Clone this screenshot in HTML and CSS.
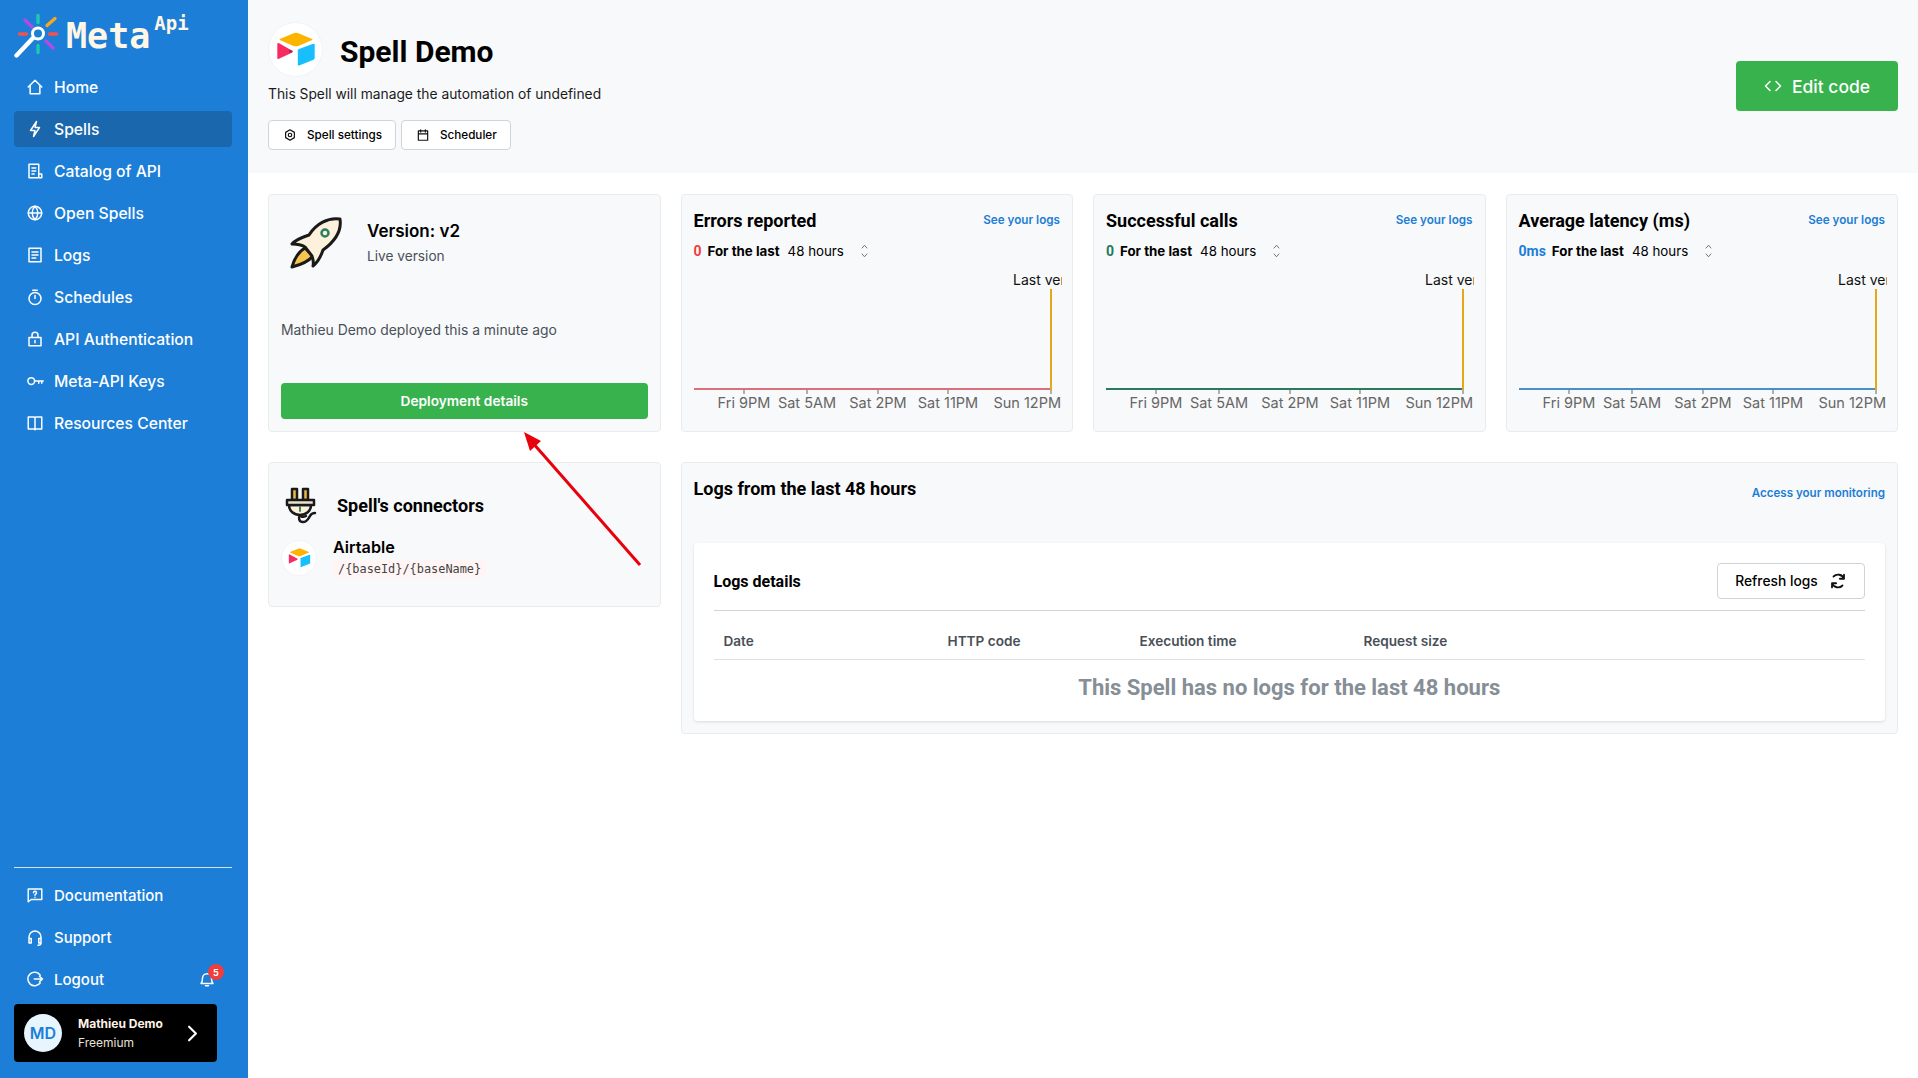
FILE: index.html
```html
<!DOCTYPE html>
<html>
<head>
  <meta charset="utf-8">
  <title>Spell Demo</title>
  <link rel="stylesheet" href="styles.css">
</head>
<body>
<div class="app">
  <aside class="sidebar">
    <div class="logo">
      <svg class="logo-mark" viewBox="14 14 44 44" width="44" height="44" fill="none" stroke-linecap="round">
        <path d="M38 15.5v7M38 45.5v7" stroke="#1fc8b0" stroke-width="3.4"/>
        <path d="M47 25.5l8-7" stroke="#f5a91c" stroke-width="3.4"/>
        <path d="M25 20l7 7M46 41l7 7" stroke="#b14be8" stroke-width="3.4"/>
        <path d="M19.5 34h7M49.5 34h7" stroke="#f0524f" stroke-width="3.4"/>
        <path d="M33 38L16.500 55.500" stroke="#fff" stroke-width="4.400"/>
        <circle cx="38" cy="33.500" r="5.500" stroke="#fff" stroke-width="3"/>
      </svg>
      <span class="logo-meta">Meta</span><span class="logo-api">Api</span>
    </div>

    <nav class="nav">
      <a class="nav-item"><svg class="ico" viewBox="0 0 24 24"><path d="M3 12l9-9 9 9M5.500 10v11h13V10"/></svg>Home</a>
      <a class="nav-item active"><svg class="ico" viewBox="0 0 24 24"><path d="M14 2L6 14h6l-2 8 8-12h-6z"/></svg>Spells</a>
      <a class="nav-item"><svg class="ico" viewBox="0 0 24 24"><path d="M17 21H4V3h13v18h4v-5h-4M8 8h5M8 12h5M8 16h3"/></svg>Catalog of API</a>
      <a class="nav-item"><svg class="ico" viewBox="0 0 24 24"><circle cx="12" cy="12" r="9"/><path d="M3 12h18M12 3c-5 5-5 13 0 18M12 3c5 5 5 13 0 18"/></svg>Open Spells</a>
      <a class="nav-item"><svg class="ico" viewBox="0 0 24 24"><path d="M4 3h16v18H4zM8 8h8M8 12h8M8 16h5"/></svg>Logs</a>
      <a class="nav-item"><svg class="ico" viewBox="0 0 24 24"><circle cx="12" cy="14" r="8"/><path d="M9 3h6M12 14v-4"/></svg>Schedules</a>
      <a class="nav-item"><svg class="ico" viewBox="0 0 24 24"><path d="M4 10h16v11H4zM8 10V7a4 4 0 018 0v3M12 14v3"/></svg>API Authentication</a>
      <a class="nav-item"><svg class="ico" viewBox="0 0 24 24"><circle cx="7" cy="12" r="4.500"/><path d="M11.500 12H23M17 12v3M21 12v3"/></svg>Meta-API Keys</a>
      <a class="nav-item"><svg class="ico" viewBox="0 0 24 24"><path d="M3 4h8l1 1 1-1h8v16h-8l-1 1-1-1H3zM12 5v15"/></svg>Resources Center</a>
    </nav>

    <div class="sidebar-bottom">
      <div class="divider"></div>
      <a class="nav-item"><svg class="ico" viewBox="0 0 24 24"><path d="M3 4h18v14H7l-4 3zM10 9a2 2 0 113 1.700c-.7.5-1 .8-1 1.600M12 15v.1"/></svg>Documentation</a>
      <a class="nav-item"><svg class="ico" viewBox="0 0 24 24"><path d="M4 15v-3a8 8 0 0116 0v3M4 14h3v6H4zM17 14h3v6h-3zM20 20c0 2-2 3-4 3"/></svg>Support</a>
      <a class="nav-item"><svg class="ico" viewBox="0 0 24 24"><path d="M19 7a9 9 0 100 10M11 12h11M18 8.500l4 3.500-4 3.500"/></svg>Logout
        <span class="bell">
          <svg class="ico" viewBox="0 0 24 24"><path d="M4 18c2-2 2-3 2-7a6 6 0 0112 0c0 4 0 5 2 7zM10 21h4"/></svg>
          <span class="badge">5</span>
        </span>
      </a>
      <div class="user">
        <span class="user-avatar">MD</span>
        <div class="user-text">
          <div class="user-name">Mathieu Demo</div>
          <div class="user-plan">Freemium</div>
        </div>
        <svg class="user-chevron" viewBox="0 0 12 20" width="11" height="17"><path d="M2 2l8 8-8 8"/></svg>
      </div>
    </div>
  </aside>

  <main class="main">
    <header class="header">
      <div>
        <div class="title-row">
          <span class="round-logo big">
            <svg viewBox="0 0 33 29" width="40" height="35"><path fill="#fcb400" d="M14.500 1L3.500 5.500q-1.500.7 0 1.300L14.500 11.500q2 .8 4 0L29.500 6.800q1.500-.6 0-1.300L18.500 1q-2-.8-4 0z"/><path fill="#18bfff" d="M18 15v12q0 1.200 1.200.7L31 23q1-.4 1-1.400V10.500q0-1.200-1.200-.7L19 14q-1 .4-1 1z"/><path fill="#f82b60" d="M1 10v11.500q0 1.300 1.300.7L13.500 17l.3-1.300L2.500 9.300Q1 8.600 1 10z"/><path fill="#8a2a52" d="M11 14.500l3 1.500-3 1.400z"/></svg>
          </span>
          <h1 class="title">Spell Demo</h1>
        </div>
        <p class="desc">This Spell will manage the automation of undefined</p>
        <div class="header-btns">
          <a class="small-btn"><svg class="ico dark" viewBox="0 0 24 24"><path d="M12 3l7.500 4.500v9L12 21l-7.500-4.500v-9z"/><circle cx="12" cy="12" r="3"/></svg>Spell settings</a>
          <a class="small-btn"><svg class="ico dark" viewBox="0 0 24 24"><path d="M4 5h16v16H4zM4 10h16M8 3v4M16 3v4"/></svg>Scheduler</a>
        </div>
      </div>
      <a class="edit-btn"><svg class="ico" viewBox="0 0 24 24"><path d="M8 6l-6 6 6 6M16 6l6 6-6 6"/></svg>Edit code</a>
    </header>

    <section class="grid">
      <div class="card version">
        <div class="version-top">
          <svg viewBox="10 6 52 54" width="52" height="54"><path fill="#f6c54f" stroke="#1a1a1a" stroke-width="3" stroke-linejoin="round" d="M25 38C18 42 14 50 12 57c8-2 16-5 21-11z"/><path fill="#fdf1dc" stroke="#1a1a1a" stroke-width="3" stroke-linejoin="round" d="M60 9C48 7 36 14 29 25c-6 2-13 4-17 9 6 0 10 1 13 3l7 9c1 3 2 6 1 10 5-4 8-10 10-16C54 32 62 22 60 9z"/><circle cx="45" cy="23" r="3.500" fill="#fdf1dc" stroke="#2a7f62" stroke-width="2.500"/></svg>
          <div>
            <div class="version-name">Version: v2</div>
            <div class="version-sub">Live version</div>
          </div>
        </div>
        <p class="version-by">Mathieu Demo deployed this a minute ago</p>
        <a class="deploy-btn">Deployment details</a>
      </div>

      <div class="card chart-card">
        <div class="chart-head"><h3 class="card-title">Errors reported</h3><a class="link">See your logs</a></div>
        <div class="chart-sub"><b class="val red">0</b><b>For the last</b><span>48 hours</span><svg class="updown" viewBox="0 0 10 18"><path d="M2 6l3-3.500L8 6M2 12l3 3.500L8 12"/></svg></div>
        <svg class="chart" viewBox="0 0 368 140" width="368" height="140">
          <svg x="319" y="0" width="49" height="20"><text class="last" x="0" y="15">Last version</text></svg>
          <path class="ticks" d="M50 119v5M113 119v5M184 119v5M254 119v5M357 119v5"/>
          <path d="M0 119H357" stroke="#d9707a" stroke-width="2"/>
          <path d="M357 19V120" stroke="#e6a817" stroke-width="2"/>
          <text class="lbl" x="50" y="138" text-anchor="middle">Fri 9PM</text>
          <text class="lbl" x="113" y="138" text-anchor="middle">Sat 5AM</text>
          <text class="lbl" x="184" y="138" text-anchor="middle">Sat 2PM</text>
          <text class="lbl" x="254" y="138" text-anchor="middle">Sat 11PM</text>
          <text class="lbl" x="367" y="138" text-anchor="end">Sun 12PM</text>
        </svg>
      </div>

      <div class="card chart-card">
        <div class="chart-head"><h3 class="card-title">Successful calls</h3><a class="link">See your logs</a></div>
        <div class="chart-sub"><b class="val green">0</b><b>For the last</b><span>48 hours</span><svg class="updown" viewBox="0 0 10 18"><path d="M2 6l3-3.500L8 6M2 12l3 3.500L8 12"/></svg></div>
        <svg class="chart" viewBox="0 0 368 140" width="368" height="140">
          <svg x="319" y="0" width="49" height="20"><text class="last" x="0" y="15">Last version</text></svg>
          <path class="ticks" d="M50 119v5M113 119v5M184 119v5M254 119v5M357 119v5"/>
          <path d="M0 119H357" stroke="#2c7a5c" stroke-width="2"/>
          <path d="M357 19V120" stroke="#e6a817" stroke-width="2"/>
          <text class="lbl" x="50" y="138" text-anchor="middle">Fri 9PM</text>
          <text class="lbl" x="113" y="138" text-anchor="middle">Sat 5AM</text>
          <text class="lbl" x="184" y="138" text-anchor="middle">Sat 2PM</text>
          <text class="lbl" x="254" y="138" text-anchor="middle">Sat 11PM</text>
          <text class="lbl" x="367" y="138" text-anchor="end">Sun 12PM</text>
        </svg>
      </div>

      <div class="card chart-card">
        <div class="chart-head"><h3 class="card-title">Average latency (ms)</h3><a class="link">See your logs</a></div>
        <div class="chart-sub"><b class="val blue">0ms</b><b>For the last</b><span>48 hours</span><svg class="updown" viewBox="0 0 10 18"><path d="M2 6l3-3.500L8 6M2 12l3 3.500L8 12"/></svg></div>
        <svg class="chart" viewBox="0 0 368 140" width="368" height="140">
          <svg x="319" y="0" width="49" height="20"><text class="last" x="0" y="15">Last version</text></svg>
          <path class="ticks" d="M50 119v5M113 119v5M184 119v5M254 119v5M357 119v5"/>
          <path d="M0 119H357" stroke="#4a90c8" stroke-width="2"/>
          <path d="M357 19V120" stroke="#e6a817" stroke-width="2"/>
          <text class="lbl" x="50" y="138" text-anchor="middle">Fri 9PM</text>
          <text class="lbl" x="113" y="138" text-anchor="middle">Sat 5AM</text>
          <text class="lbl" x="184" y="138" text-anchor="middle">Sat 2PM</text>
          <text class="lbl" x="254" y="138" text-anchor="middle">Sat 11PM</text>
          <text class="lbl" x="367" y="138" text-anchor="end">Sun 12PM</text>
        </svg>
      </div>

      <div class="card connectors">
        <div class="conn-head">
          <svg viewBox="10 6 32 38" width="32" height="38" fill="none" stroke="#1a1a1a" stroke-width="2.500" stroke-linejoin="round" stroke-linecap="round"><path fill="#e9b949" d="M17 20V9h5v11zM28 20V9h5v11z"/><path fill="#fdf1dc" d="M14 25c0 6 5 10 11 10s11-4 11-10z"/><path fill="#e9e2cf" d="M12 20h27v5H12z"/><path d="M25 35c-2 3-1 7 3 7s5-3 7-6c1-2 3-3 5-3M31 36c-2 1-4 1-5 0"/><path stroke="#3d8a5f" stroke-width="2" d="M25 27v4"/></svg>
          <h3 class="card-title">Spell's connectors</h3>
        </div>
        <div class="conn-item">
          <span class="round-logo">
            <svg viewBox="0 0 33 29" width="23" height="20"><path fill="#fcb400" d="M14.500 1L3.500 5.500q-1.500.7 0 1.300L14.500 11.500q2 .8 4 0L29.500 6.800q1.500-.6 0-1.300L18.500 1q-2-.8-4 0z"/><path fill="#18bfff" d="M18 15v12q0 1.200 1.200.7L31 23q1-.4 1-1.400V10.500q0-1.200-1.200-.7L19 14q-1 .4-1 1z"/><path fill="#f82b60" d="M1 10v11.500q0 1.300 1.300.7L13.500 17l.3-1.300L2.500 9.300Q1 8.600 1 10z"/></svg>
          </span>
          <div>
            <div class="conn-name">Airtable</div>
            <code class="conn-path">/{baseId}/{baseName}</code>
          </div>
        </div>
      </div>

      <div class="card logs">
        <div class="logs-head"><h3 class="card-title">Logs from the last 48 hours</h3><a class="link">Access your monitoring</a></div>
        <div class="logs-panel">
          <div class="logs-bar">
            <span class="logs-title">Logs details</span>
            <a class="refresh">Refresh logs<svg class="ico dark" viewBox="0 0 24 24"><path d="M6 6A8.500 8.500 0 0120 9M18 18A8.500 8.500 0 014 15M20 3.500V9H14.500M4 20.500V15H9.500"/></svg></a>
          </div>
          <div class="logs-cols"><span>Date</span><span>HTTP code</span><span>Execution time</span><span>Request size</span></div>
          <div class="logs-empty">This Spell has no logs for the last 48 hours</div>
        </div>
      </div>
    </section>
  </main>

  <svg class="arrow" width="1918" height="1078" viewBox="0 0 1918 1078"><path d="M640 565L532 442" stroke="#e8000b" stroke-width="3" fill="none"/><path d="M524 432l17 9-11 10z" fill="#e8000b"/></svg>
</div>
</body>
</html>
```

FILE: styles.css
```css
* { box-sizing: border-box; }

html, body { margin: 0; height: 100%; background: #fff; }

body { font-family: Inter, "Noto Sans", sans-serif; color: #000; overflow: hidden; }

a { color: inherit; text-decoration: none; }
h1, h3, p { margin: 0; }

.app { display: flex; height: 1078px; position: relative; }

.arrow { position: absolute; left: 0; top: 0; pointer-events: none; }

.ico { width: 18px; height: 18px; flex: none; fill: none; stroke: #fff; stroke-width: 2; stroke-linecap: round; stroke-linejoin: round; }
.ico.dark { stroke: #111; }

/* sidebar */
.sidebar { width: 248px; flex: none; background: #1c7ed6; color: #fff; padding: 14px 16px 16px 14px; display: flex; flex-direction: column; }

.logo { height: 55px; display: flex; align-items: flex-start; font-family: "DejaVu Sans Mono", monospace; font-weight: bold; color: #fff6e5; }
.logo-mark { flex: none; }
.logo-meta { font-size: 35px; line-height: 41px; margin-left: 8px; margin-top: 2px; }
.logo-api { font-size: 19px; line-height: 22px; margin-left: 4px; margin-top: -2px; }

.nav { display: flex; flex-direction: column; gap: 6px; }

.nav-item { height: 36px; display: flex; align-items: center; gap: 10px; padding-left: 12px; border-radius: 4px; font-size: 15px; font-weight: 500; }
.nav .nav-item { font-size: 15.700px; }
.nav-item.active { background: #1a67ae; }

.sidebar-bottom { margin-top: auto; display: flex; flex-direction: column; gap: 6px; }
.divider { height: 1px; background: #cfe4f7; margin-bottom: 3px; }

.bell { margin-left: auto; margin-right: 16px; position: relative; display: flex; }
.badge { position: absolute; top: -6px; right: -8px; width: 16px; height: 16px; border-radius: 50%; background: #f03e3e; font-size: 9px; font-weight: 700; display: flex; align-items: center; justify-content: center; }

.user { width: 203px; height: 58px; margin-top: 1px; background: #000; border-radius: 4px; display: flex; align-items: center; padding: 0 19px 0 10px; }
.user-avatar { width: 38px; height: 38px; border-radius: 50%; background: #e7f5ff; color: #1c7ed6; font-size: 16px; font-weight: 600; display: flex; align-items: center; justify-content: center; }
.user-text { margin-left: 16px; flex: 1; }
.user-name { font-size: 12px; font-weight: 700; line-height: 19px; color: #fff3e6; }
.user-plan { font-size: 12px; line-height: 19px; color: #e9e2d8; }
.user-chevron { fill: none; stroke: #fff; stroke-width: 2.500; stroke-linecap: round; stroke-linejoin: round; }

/* main */
.main { flex: 1; min-width: 0; }

.header { height: 173px; background: #f8f9fa; padding: 22px 20px 0; display: flex; justify-content: space-between; align-items: flex-start; }

.title-row { display: flex; align-items: center; gap: 17px; }
.title { font-family: Roboto, sans-serif; font-size: 30px; font-weight: 700; margin-top: 3px; }

.round-logo { width: 36px; height: 36px; border-radius: 50%; background: #fff; border: 1px solid #f1f3f5; display: flex; align-items: center; justify-content: center; flex: none; }
.round-logo.big { width: 55px; height: 55px; }

.desc { font-size: 13.800px; line-height: 20px; margin-top: 7px; color: #1a1a1a; }

.header-btns { display: flex; gap: 5px; margin-top: 16px; }
.small-btn { height: 30px; padding: 0 13px 0 14px; background: #fff; border: 1px solid #ced4da; border-radius: 4px; display: flex; align-items: center; gap: 10px; font-size: 11.700px; font-weight: 500; }
.small-btn .ico { width: 14px; height: 14px; }

.edit-btn { width: 162px; height: 50px; margin-top: 39px; background: #37b24d; color: #fff; border-radius: 4px; display: flex; align-items: center; justify-content: center; gap: 10px; font-size: 17.500px; font-weight: 500; }

.grid { padding: 21px 20px 0; display: grid; grid-template-columns: repeat(4, minmax(0, 1fr)); gap: 30px 20px; align-items: start; }

.card { background: #f8f9fa; border: 1px solid #e9ecef; border-radius: 4px; padding: 12px; }
.card-title { font-family: Roboto, sans-serif; font-size: 18px; font-weight: 700; }

.link { font-size: 11.700px; font-weight: 600; color: #1c7ed6; }

/* version */
.version { height: 238px; display: flex; flex-direction: column; }
.version-top { display: flex; gap: 25px; padding: 9px 0 0 9px; height: 72px; }
.version-name { font-size: 17px; font-weight: 600; line-height: 20px; margin-top: 5px; }
.version-sub { font-size: 13.700px; line-height: 20px; margin-top: 5px; color: #495057; }
.version-by { font-size: 13.900px; line-height: 20px; color: #495057; margin-top: 41px; }
.deploy-btn { margin-top: auto; height: 36px; background: #37b24d; color: #fff; border-radius: 4px; display: flex; align-items: center; justify-content: center; font-size: 13.700px; font-weight: 600; }

/* chart cards */
.chart-card { height: 238px; }
.chart-head { display: flex; justify-content: space-between; align-items: center; height: 26px; }
.chart-head .link { margin-top: -1px; }
.chart-sub { display: flex; align-items: center; height: 20px; margin-top: 8px; font-size: 13.300px; gap: 6px; }
.chart-sub b { font-weight: 700; }
.chart-sub span { margin-left: 2px; }
.val { font-family: Roboto, sans-serif; font-size: 14px; }
.val.red { color: #f03e3e; }
.val.green { color: #1f7a5c; }
.val.blue { color: #1c7ed6; }
.updown { width: 9px; height: 16px; margin-left: 10px; fill: none; stroke: #666; stroke-width: 1; }

.chart { display: block; margin-top: 9px; overflow: visible; }
.last { font-size: 14px; fill: #111; }
.lbl { font-size: 14.500px; fill: #666; }
.ticks { stroke: #666; stroke-width: 1; fill: none; }

/* connectors */
.connectors { height: 145px; }
.conn-head { display: flex; align-items: center; gap: 20px; padding: 11px 0 0 4px; }
.conn-item { display: flex; gap: 16px; margin-top: 13px; align-items: center; }
.conn-name { font-size: 16.200px; font-weight: 600; line-height: 20px; }
.conn-path { display: inline-block; font-family: "DejaVu Sans Mono", monospace; font-size: 11.900px; line-height: 18px; padding: 0 5px; color: #444; background: #fff5f5; }

/* logs */
.logs { grid-column: span 3; height: 272px; }
.logs-head { display: flex; justify-content: space-between; align-items: flex-start; height: 68px; }
.logs-head .link { margin-top: 11px; font-size: 11.600px; }
.logs-head .card-title { margin-top: 3px; }

.logs-panel { background: #fff; border-radius: 4px; box-shadow: 0 1px 3px rgba(0, 0, 0, .12); padding: 20px; height: 178px; }
.logs-bar { display: flex; justify-content: space-between; align-items: center; height: 48px; padding-bottom: 11px; border-bottom: 1px solid #ced4da; }
.logs-title { font-family: Roboto, sans-serif; font-size: 16px; font-weight: 700; }
.refresh { width: 148px; height: 36px; border: 1px solid #ced4da; border-radius: 4px; display: flex; align-items: center; justify-content: center; gap: 11px; font-size: 13.800px; font-weight: 500; }
.refresh .ico { stroke-width: 2.400; }

.logs-cols { display: grid; grid-template-columns: 224px 192px 224px 1fr; height: 49px; align-items: center; padding: 12px 0 0 10px; border-bottom: 1px solid #dee2e6; font-size: 13.600px; font-weight: 600; color: #495057; }

.logs-empty { text-align: center; font-family: Roboto, sans-serif; font-size: 22px; font-weight: 700; color: #868e96; line-height: 55px; }
```
